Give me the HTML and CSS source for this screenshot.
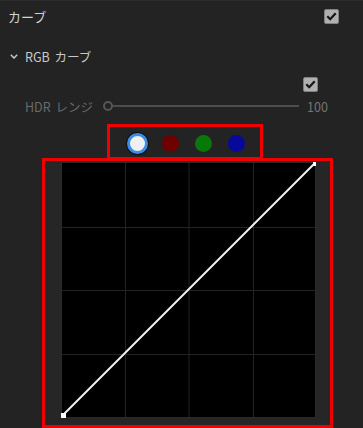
FILE: index.html
```html
<!DOCTYPE html>
<html lang="ja">
<head>
    <meta charset="UTF-8">
    <meta name="viewport" content="width=device-width, initial-scale=1.0">
    <title>カーブ</title>
    <link rel="stylesheet" href="styles.css">
</head>
<body>
    <div class="panel">
        <div class="header">
            <span class="title">カーブ</span>
            <span class="check"><svg width="11" height="9" viewBox="0 0 11 9"><path d="M1.3 4.3 L4.2 7.2 L9.7 1.3" fill="none" stroke="#151515" stroke-width="2.2"/></svg></span>
        </div>

        <div class="section">
            <svg class="chevron" width="8" height="5" viewBox="0 0 8 5"><path d="M0.8 0.8 L4 4 L7.2 0.8" fill="none" stroke="#c8c8c8" stroke-width="1.5"/></svg>
            <span>RGB カーブ</span>
        </div>

        <div class="check-row">
            <span class="check"><svg width="11" height="9" viewBox="0 0 11 9"><path d="M1.3 4.3 L4.2 7.2 L9.7 1.3" fill="none" stroke="#151515" stroke-width="2.2"/></svg></span>
        </div>

        <div class="slider-row">
            <span class="label">HDR レンジ</span>
            <div class="slider">
                <span class="knob"></span>
                <span class="track"></span>
            </div>
            <span class="value">100</span>
        </div>

        <div class="channels">
            <span class="slot"><span class="dot white"></span></span>
            <span class="slot"><span class="dot red"></span></span>
            <span class="slot"><span class="dot green"></span></span>
            <span class="slot"><span class="dot blue"></span></span>
        </div>

        <div class="plot-frame">
            <svg class="plot" width="255" height="256" viewBox="0 0 255 256">
                <rect x="0" y="0" width="255" height="256" fill="#000"/>
                <g stroke="#232323" stroke-width="1">
                    <line x1="64.5" y1="0" x2="64.5" y2="256"/>
                    <line x1="128" y1="0" x2="128" y2="256"/>
                    <line x1="192.5" y1="0" x2="192.5" y2="256"/>
                    <line x1="0" y1="65.5" x2="255" y2="65.5"/>
                    <line x1="0" y1="128.5" x2="255" y2="128.5"/>
                    <line x1="0" y1="192.5" x2="255" y2="192.5"/>
                </g>
                <rect x="0.5" y="0.5" width="254" height="255" fill="none" stroke="#2a2a2a"/>
                <line x1="2" y1="253" x2="253" y2="2" stroke="#f2f2f2" stroke-width="2"/>
                <rect x="0" y="251" width="5" height="5" fill="#fff"/>
                <rect x="252" y="0" width="4" height="4" fill="#fff"/>
            </svg>
        </div>
    </div>
</body>
</html>
```

FILE: styles.css
```css
*{
    margin: 0px;
    padding: 0px;
    box-sizing: border-box;
}
body{
    background-color: #232323;
    font-family: "Noto Sans CJK JP", "Noto Sans", sans-serif;
    font-size: 12.5px;
    color: #c8c8c8;
}
.panel{
    width: 363px;
    height: 428px;
    overflow: hidden;
    border-top: 1px solid #2c2c2c;
}
.header{
    display: flex;
    align-items: center;
    justify-content: space-between;
    height: 30px;
    padding: 0px 24px 0px 8px;
}
.title{
    font-size: 13px;
    color: #d2d2d2;
}
.check{
    display: flex;
    align-items: center;
    justify-content: center;
    width: 15px;
    height: 15px;
    border-radius: 2px;
    background-color: #b0b0b0;
    border: 1px solid #808080;
}
.section{
    display: flex;
    align-items: center;
    height: 18px;
    margin-top: 16px;
    padding-left: 10px;
    word-spacing: 2px;
}
.chevron{
    margin-right: 7px;
}
.check-row{
    display: flex;
    justify-content: flex-end;
    margin-top: 12px;
    padding-right: 45px;
}
.slider-row{
    display: flex;
    align-items: center;
    height: 18px;
    margin-top: 5px;
    padding-left: 25px;
}
.label{
    width: 78px;
    color: #6a6a6a;
    word-spacing: 2px;
}
.slider{
    display: flex;
    align-items: center;
    width: 196px;
}
.knob{
    width: 10px;
    height: 10px;
    border-radius: 50%;
    border: 2px solid #575757;
}
.track{
    flex: 1;
    height: 2px;
    background-color: #4d4d4d;
}
.value{
    margin-left: 8px;
    color: #757575;
}
.channels{
    display: flex;
    align-items: center;
    width: 156px;
    height: 36px;
    margin-top: 9px;
    margin-left: 107px;
    padding: 2px 0px 0px 11px;
    border: 3px solid #f00000;
}
.slot{
    display: flex;
    justify-content: center;
    width: 33px;
}
.dot{
    width: 17px;
    height: 17px;
    border-radius: 50%;
}
.dot.white{
    width: 21px;
    height: 21px;
    background-color: #f0f0f0;
    border: 3px solid #3a8ee8;
    box-shadow: 0 0 0 1px #111;
}
.dot.red{
    background-color: #6e0000;
}
.dot.green{
    background-color: #087808;
}
.dot.blue{
    background-color: #08099a;
}
.plot-frame{
    width: 291px;
    height: 270px;
    margin-top: -2px;
    margin-left: 42px;
    padding: 1px 14px 0px 16px;
    border: 3px solid #f00000;
    background-color: #262626;
}
.plot{
    display: block;
}
```
